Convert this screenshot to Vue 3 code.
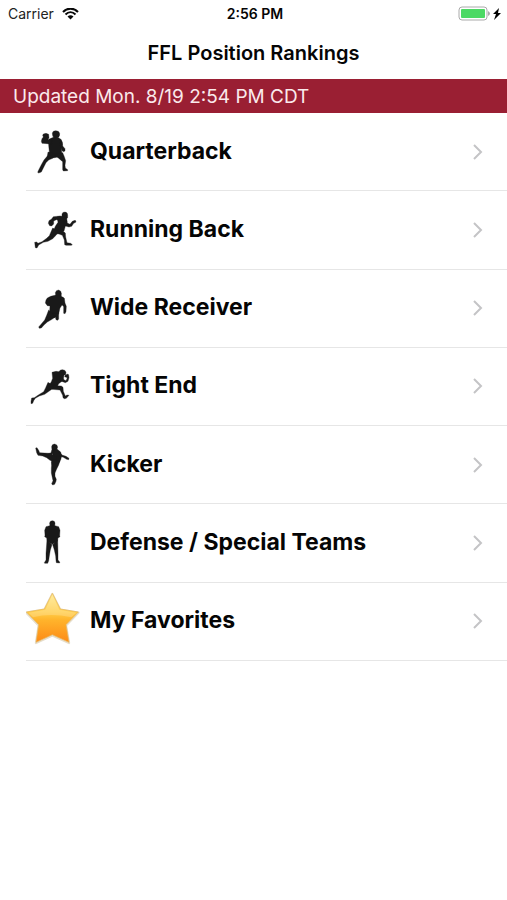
<script setup>
const positions = [
  {
    name: 'Quarterback',
    viewBox: '18 -21 192 234',
    paths: [
      'M97 41q0-9 10-9 11 0 12 9 1 9-7 13l-9 1q-6-5-6-14z',
      'M86 58l16-7 14 2 8 6 3 14-3 14 2 14-2 8-20 4-22-2 6-15-2-20z',
      'M70 42l8-2 8 3 1 10-3 6 3 1 10-3-2 16-14-2-15-1-2-6 2-8 4-5-2-5z',
      'M120 58l7 8 1 12 7 8v7l-5 2-5-4-4-14z',
      'M84 96l24 6-8 12-14 6-8 8-5 10-9 18-8 3-3-2 3-7 8-16 8-14 10-12z',
      'M102 104l26-6 5 12 4 12-2 14 1 8 7 5v3l-13 1-2-4v-24l-14-12z'
    ]
  },
  {
    name: 'Running Back',
    viewBox: '18 -27 192 234',
    paths: [
      'M126 42q1-6 9-6 8 1 8 9v8q-3 5-9 4l-8-3z',
      'M112 50l16-2 12 7 2 12-6 12-4 14-14 4-18-4 6-14 8-12-2-10z',
      'M122 48l-22 2-6 8-7 4-2 8 4 7 6 1 6-6v-9l8-4 12 2z',
      'M132 60l8 8 10 5 7-9 8-3 3 2-1 4-6 3-6 9-8 2-14-4z',
      'M100 86l30 8 6 5 1 12 4 17 11 2 5 4-3 2-16 0-4-2-1-14-6-14-10-4-18-2z',
      'M98 84l18 12-8 10-10 10-14 8-14 3-14 8-5 9-5-1-2-16 6-1 4 4 12-5 14-10 8-8z'
    ]
  },
  {
    name: 'Wide Receiver',
    viewBox: '18 -26 192 234',
    paths: [
      'M106 42q2-8 10-8 8 2 8 10v6l-4 5h-12z',
      'M92 53l16-4 16 4 8 5-2 16-10 14-4 18-14 12-16-2 3-20 1-14-8-1-6-8 2-9 4-6z',
      'M122 54l11 5 2 14 4 10-1 16-3 6-4-1v-20l-9-10z',
      'M98 104h18v17l-3 4-5-2-2-8-10 2z',
      'M86 94l20 20-10 8-14 8-10 9-8 9-6 1-2-4 6-7 12-14 6-14z'
    ]
  },
  {
    name: 'Tight End',
    viewBox: '18 -21 192 234',
    paths: [
      'M117 50q3-7 11-6 9 1 10 8l-1 7-8 2-12-1z',
      'M96 52l12-3 14 2 10 9-2 16-14 10-6 12-26-2 10-16 4-10z',
      'M120 64l12 10 6 3 4-9-8-3 2-5 8-3 2 3 1 8-3 11-8 4-16-6z',
      'M86 84l22 8 16 1 5 4 1 12 6 14 5-3 6 1-8 9-6 1-4-3-1-7-8-16-24-2z',
      'M84 82l18 16-14 10-14 10-16 5-12 7-5 7-3 8-5 1v-7l2-10 8-1 12-8 16-10 6-12z'
    ]
  },
  {
    name: 'Kicker',
    viewBox: '18 -21 192 234',
    paths: [
      'M95 41q1-8 9-8 8 1 9 9l-3 9-6 4-8-2z',
      'M98 52l14-3 10 8 3 12-3 12-8 12-18 4-2-10 8-12-4-12z',
      'M116 54l10 12 12 4 9 6-1 4-6-1-10-6-10-3z',
      'M95 52h8l-3 9-8 5-8-3 9-4z',
      'M104 88l-14-6-10-8-12-5-14-2-4-8-3-14 4-1 5 8 3 7 14 1 16 1 12 5 10 8z',
      'M96 80l24 4-4 12-6 12-5 12v10l4 9-1 6-4 9-6 2-3-4 4-9-2-9-3-14v-14z'
    ]
  },
  {
    name: 'Defense / Special Teams',
    viewBox: '18 -17 192 234',
    paths: [
      'M89 38q0-8 8-8t8 8l-1 10h-14z',
      'M78 48l11-3h16l11 3 4 11-1 15 1 4-6 4-2 10-15 9-15-9-2-10-6-4 1-4-1-15z',
      'M81 86l15 16-5 16-3 18-2 14-3 8h-9l-1-2 5-8v-20z',
      'M113 86l-15 16 5 16 4 18 1 14 1 6 10 1v-3l-5-6v-20z'
    ]
  },
  { name: 'My Favorites', viewBox: '18 -7 192 234', star: true }
]
</script>

<template>
  <main class="screen">
    <div class="status">
      <div class="carrier">
        <span>Carrier</span>
        <svg class="wifi" viewBox="0 0 34 24" aria-hidden="true">
          <path d="M2 8C10-1 24-1 32 8M7 13c6-6 14-6 20 0" />
          <path class="dot" d="M11 17q6-5 12 0l-6 6z" />
        </svg>
      </div>
      <span class="time">2:56 PM</span>
      <div class="power">
        <svg viewBox="0 0 44 16" aria-hidden="true">
          <rect class="case" x="1" y="1" width="28" height="13" rx="3" />
          <rect class="charge" x="3" y="3" width="24" height="9" rx="1" />
          <path class="cap" d="M30 5q2 1 2 2.500t-2 2.500z" />
          <path d="M41 2l-6 6h3l-2 6 7-7h-3z" />
        </svg>
      </div>
    </div>
    <header>
      <h1>FFL Position Rankings</h1>
    </header>
    <p class="updated">Updated Mon. 8/19 2:54 PM CDT</p>
    <nav>
      <a v-for="item in positions" :key="item.name" class="row" href="#">
        <svg class="figure" :viewBox="item.viewBox" aria-hidden="true">
          <template v-if="item.star">
            <defs>
              <linearGradient id="gold" x1="0" y1="0" x2="0" y2="1">
                <stop offset="0" stop-color="#ffe889" />
                <stop offset="0.4" stop-color="#ffcb45" />
                <stop offset="0.55" stop-color="#ffb32b" />
                <stop offset="1" stop-color="#fd8a16" />
              </linearGradient>
            </defs>
            <path class="shade" d="M97 26l24 47 54 9-37 38 9 53-50-23-49 23 8-53-37-38 54-9z" />
            <path class="star" fill="url(#gold)" d="M97 24l24 47 54 9-37 38 9 53-50-23-49 23 8-53-37-38 54-9z" />
            <path class="gloss" d="M97 29l21 44 51 9-15 14Q92 82 39 96L26 82l50-9z" />
          </template>
          <path v-for="d in item.paths" :key="d" class="player" :d="d" />
        </svg>
        <span class="label">{{ item.name }}</span>
        <svg class="chevron" viewBox="0 0 10 16" aria-hidden="true">
          <path d="M1 1l7 7-7 7" />
        </svg>
      </a>
    </nav>
  </main>
</template>

<style>
body {
  margin: 0;
  background: #fff;
}
</style>

<style scoped>
.screen {
  color: #050505;
  font-family: Inter, "Liberation Sans", sans-serif;
}
.status {
  display: grid;
  grid-template-columns: 1fr auto 1fr;
  align-items: center;
  height: 27px;
  padding: 0 5px 0 8px;
  font-size: 14px;
  line-height: 20px;
}
.carrier {
  display: flex;
  align-items: center;
  gap: 8px;
  color: #222;
}
.wifi {
  width: 17px;
  height: 12px;
  fill: none;
  stroke: #080808;
  stroke-width: 4;
}
.wifi .dot {
  fill: #080808;
  stroke: none;
}
.time {
  font-weight: 600;
}
.power {
  display: flex;
  justify-content: flex-end;
}
.power svg {
  width: 44px;
  height: 16px;
}
.case {
  fill: #fff;
  stroke: #aaa;
}
.charge {
  fill: #4cd964;
}
.cap {
  fill: #aaa;
}
header {
  display: flex;
  align-items: center;
  justify-content: center;
  height: 52px;
}
h1 {
  margin: 0;
  font-size: 20px;
  line-height: 24px;
  font-weight: 600;
}
.updated {
  margin: 0;
  padding: 6px 13px 4px;
  background: #9a1f33;
  color: #faeaec;
  font-size: 19px;
  line-height: 24px;
}
nav {
  display: grid;
  grid-auto-rows: 1fr;
  min-height: 548px;
}
.row {
  display: flex;
  align-items: center;
  margin-left: 26px;
  padding-right: 24px;
  border-bottom: 1px solid #e6e6e6;
  color: inherit;
  text-decoration: none;
}
.figure {
  flex: none;
  width: 64px;
  height: 78px;
  margin-bottom: -1px;
}
.player {
  fill: #191919;
  stroke: #191919;
  stroke-width: 1;
  stroke-linejoin: round;
}
.star {
  stroke: #e8b75a;
  stroke-width: 2;
  stroke-linejoin: round;
}
.shade {
  fill: none;
  stroke: #e5ddcc;
  stroke-width: 7;
  stroke-linejoin: round;
}
.gloss {
  fill: #fff;
  opacity: 0.2;
}
.label {
  flex: 1;
  padding-bottom: 2px;
  font-size: 23px;
  line-height: 30px;
  font-weight: 700;
}
.chevron {
  width: 10px;
  height: 16px;
  fill: none;
  stroke: #c4c4c6;
  stroke-width: 2;
}
</style>
